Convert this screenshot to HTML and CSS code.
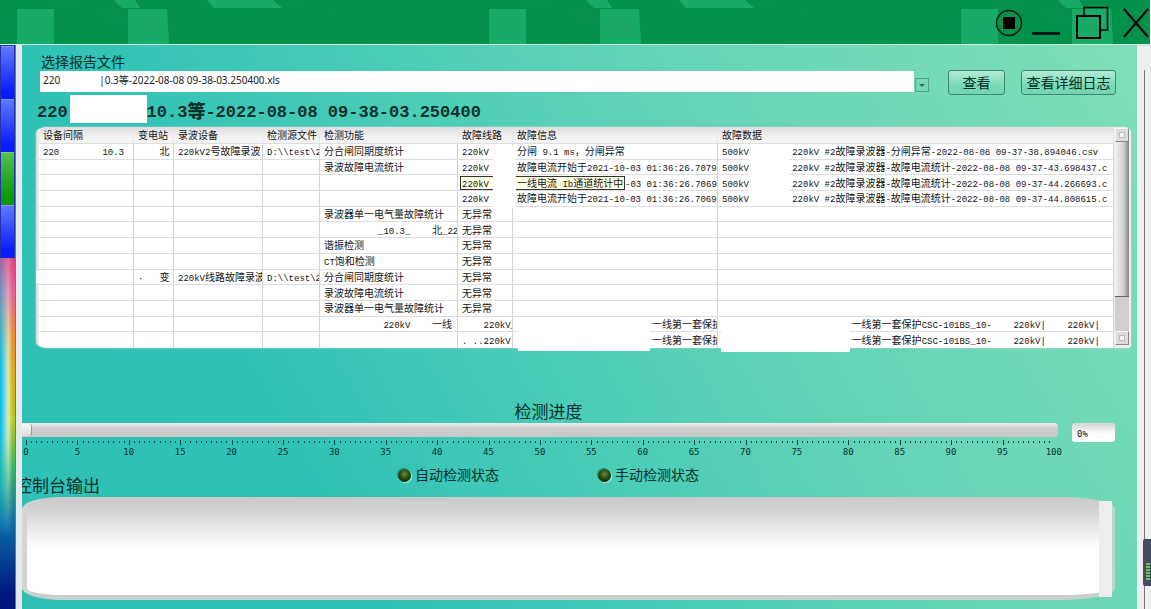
FILE: index.html
```html
<!DOCTYPE html>
<html lang="zh-CN">
<head>
<meta charset="utf-8">
<title>检测报告</title>
<link rel="stylesheet" href="styles.css">
</head>
<body>
<header class="titlebar">
  <svg class="pattern" width="100%" height="44" aria-hidden="true">
    <defs>
      <pattern id="blocks" width="472" height="44" patternUnits="userSpaceOnUse">
        <g fill="#18ab67">
          <path d="M17 9H54V44H17Z"/>
          <path d="M128 9H167L169 44H128Z"/>
          <path d="M114 0H135L140 8H122Z"/>
          <path d="M207 0H273L282 8H214Z"/>
        </g>
        <g fill="none" stroke="#2b9a60" stroke-width="1" opacity=".7">
          <path d="M134 28L147 16L160 30L150 40M138 32L148 22L156 30M142 36L149 28L153 32"/>
        </g>
        <g fill="none" stroke="#1a8a4c" stroke-width="1" opacity=".6">
          <path d="M103 10L118 22M110 8L122 18M52 4L60 1L74 6M290 2L294 8M298 0L304 6M330 14L336 10"/>
        </g>
      </pattern>
    </defs>
    <rect width="100%" height="44" fill="url(#blocks)"/>
  </svg>
  <div class="winbtns">
    <button class="wb" aria-label="停止"><svg width="28" height="28" viewBox="0 0 28 28"><circle cx="14" cy="14" r="12.5" fill="none" stroke="#05180c" stroke-width="1.5"/><rect x="8" y="8" width="12" height="12"/></svg></button>
    <button class="wb" aria-label="最小化"><svg width="30" height="28" viewBox="0 0 30 28"><path d="M1 24.500H29" stroke="#000" stroke-width="2.500"/></svg></button>
    <button class="wb" aria-label="还原"><svg width="34" height="34" viewBox="0 0 34 34" fill="none" stroke="#000"><path d="M9 9V1.500H32.500V24H26" stroke-width="1.500"/><rect x="2" y="10" width="23" height="22" stroke-width="2"/></svg></button>
    <button class="wb" aria-label="关闭"><svg width="26" height="30" viewBox="0 0 26 30"><path d="M1 1L25 29M25 1L1 29" stroke="#000" stroke-width="2"/></svg></button>
  </div>
</header>
<div class="body">
  <aside class="strip"><i></i><i></i><i class="on"></i><i></i><div class="glow"></div></aside>
  <main class="panel">
    <section class="picker">
      <label for="file">选择报告文件</label>
      <div class="pickrow">
        <div class="combo">
          <select id="file"><option>220&nbsp;&nbsp;&nbsp;&nbsp;&nbsp;&nbsp;&nbsp;&nbsp;&nbsp;&nbsp;&nbsp;&nbsp;&nbsp;&nbsp;&nbsp;|0.3等-2022-08-08 09-38-03.250400.xls</option></select>
          <span class="arrow"></span>
        </div>
        <button class="btn view">查看</button>
        <button class="btn log">查看详细日志</button>
      </div>
    </section>
    <h1>220<span class="mask"></span>10.3<b>等</b>-2022-08-08 09-38-03.250400</h1>
    <div class="grid">
      <table>
        <colgroup><col class="c1"><col class="c2"><col class="c3"><col class="c4"><col class="c5"><col class="c6"><col class="c7"><col></colgroup>
        <thead><tr><th>设备间隔</th><th>变电站</th><th>录波设备</th><th>检测源文件</th><th>检测功能</th><th>故障线路</th><th>故障信息</th><th>故障数据</th></tr></thead>
        <tbody>
          <tr><td><s>220        10.3</s></td><td><s>    </s>北</td><td><s>220kV2</s>号故障录波</td><td><s>D:\\test\2</s></td><td>分合闸同期度统计</td><td><s>220kV</s></td><td>分闸<s> 9.1 ms</s>，分闸异常</td><td><s>500kV        220kV #2</s>故障录波器<s>-</s>分闸异常<s>-2022-08-08 09-37-38.894046.csv</s></td></tr>
          <tr><td></td><td></td><td></td><td></td><td>录波故障电流统计</td><td><s>220kV</s></td><td>故障电流开始于<s>2021-10-03 01:36:26.7079</s></td><td><s>500kV        220kV #2</s>故障录波器<s>-</s>故障电流统计<s>-2022-08-08 09-37-43.698437.c</s></td></tr>
          <tr><td></td><td></td><td></td><td></td><td></td><td class="tip"><span class="hint line"><s>220kV</s></span></td><td class="tip"><span class="hint msg">一线电流<s> Ib</s>通道统计中</span><s>-03 01:36:26.7069</s></td><td><s>500kV        220kV #2</s>故障录波器<s>-</s>故障电流统计<s>-2022-08-08 09-37-44.266693.c</s></td></tr>
          <tr><td></td><td></td><td></td><td></td><td></td><td><s>220kV</s></td><td>故障电流开始于<s>2021-10-03 01:36:26.7069</s></td><td><s>500kV        220kV #2</s>故障录波器<s>-</s>故障电流统计<s>-2022-08-08 09-37-44.808615.c</s></td></tr>
          <tr><td></td><td></td><td></td><td></td><td>录波器单一电气量故障统计</td><td>无异常</td><td></td><td></td></tr>
          <tr><td></td><td></td><td></td><td></td><td><s>          _10.3_    </s>北<s>_22</s></td><td>无异常</td><td></td><td></td></tr>
          <tr><td></td><td></td><td></td><td></td><td>谐振检测</td><td>无异常</td><td></td><td></td></tr>
          <tr><td></td><td></td><td></td><td></td><td><s>CT</s>饱和检测</td><td>无异常</td><td></td><td></td></tr>
          <tr><td></td><td><s>·   </s>变</td><td><s>220kV</s>线路故障录波</td><td><s>D:\\test\2</s></td><td>分合闸同期度统计</td><td>无异常</td><td></td><td></td></tr>
          <tr><td></td><td></td><td></td><td></td><td>录波故障电流统计</td><td>无异常</td><td></td><td></td></tr>
          <tr><td></td><td></td><td></td><td></td><td>录波器单一电气量故障统计</td><td>无异常</td><td></td><td></td></tr>
          <tr><td></td><td></td><td></td><td></td><td><s>           220kV    </s>一线</td><td><s>    220kV_</s></td><td><s>                         </s>一线第一套保护</td><td><s>                        </s>一线第一套保护<s>CSC-101BS_10-    220kV|    220kV|</s></td></tr>
          <tr><td></td><td></td><td></td><td></td><td></td><td><s>. ..220kV.</s></td><td><s>                         </s>一线第一套保护</td><td><s>                        </s>一线第一套保护<s>CSC-101BS_10-    220kV|    220kV|</s></td></tr>
        </tbody>
      </table>
      <div class="vscroll"><span class="sb"></span><span class="thumb"></span><span class="track"></span><span class="sb"></span></div>
      <i class="patch p1"></i><i class="patch p2"></i><i class="patch p3"></i><i class="patch p4"></i><i class="patch p5"></i>
    </div>
    <label class="progress-title" for="progress">检测进度</label>
    <div class="progress">
      <div class="scale">
        <input type="range" id="progress" min="0" max="100" value="0">
        <div class="ticks"></div>
        <div class="nums"><span>0</span><span>5</span><span>10</span><span>15</span><span>20</span><span>25</span><span>30</span><span>35</span><span>40</span><span>45</span><span>50</span><span>55</span><span>60</span><span>65</span><span>70</span><span>75</span><span>80</span><span>85</span><span>90</span><span>95</span><span>100</span></div>
      </div>
      <input type="text" class="pct" value="0%" aria-label="检测进度百分比">
    </div>
    <div class="status">
      <span><i class="led"></i>自动检测状态</span>
      <span><i class="led"></i>手动检测状态</span>
    </div>
    <label class="console-title" for="console">控制台输出</label>
    <div class="console"><textarea id="console"></textarea><span class="cbar"></span></div>
  </main>
  <aside class="rail"><span class="meter"><i></i></span></aside>
</div>
</body>
</html>
```
FILE: styles.css
```css
* { box-sizing: border-box; }
body {
  margin: 0;
  min-height: 100vh;
  display: flex;
  flex-direction: column;
  overflow: hidden;
  font-family: "Liberation Sans", "Noto Sans CJK SC", sans-serif;
  color: #06302c;
}
button, input, select, textarea { font: inherit; color: inherit; margin: 0; }

.titlebar {
  position: relative;
  height: 45px;
  background: #03914b;
  border-bottom: 1px solid #c8f2e0;
  margin-right: 1px;
}
.pattern { display: block; }
.winbtns {
  position: absolute;
  top: 6px;
  right: 1px;
  display: flex;
  align-items: center;
  gap: 8px;
}
.wb { border: 0; padding: 0; background: none; display: flex; }
.wb:nth-child(3) { margin: 0 6px; }

.body { flex: 1; display: flex; }
.strip {
  width: 16px;
  padding-top: 1px;
  display: flex;
  flex-direction: column;
  border-right: 1px solid #8a62a8;
  background: #2233aa;
}
.strip i {
  display: block;
  height: 53px;
  margin: 0 1px;
  background: linear-gradient(#6078ff, #0a1cff 85%);
  border-top: 1px solid #8292ff;
}
.strip i.on { background: linear-gradient(#55c050, #089a08 85%); border-color: #70d070; }
.glow {
  flex: 1;
  background: linear-gradient(#e0407f, #e8609a 10%, #ef8a30 22%, #d8b010 36%, #b9c81c 46%, #35b468 60%, #0d6fa8 75%, #00157e 96%);
}
.glow::before {
  content: "";
  display: block;
  height: 100%;
  background:
    linear-gradient(to right, #06b8e4, rgba(110,225,240,.9) 35%, rgba(235,248,225,.75) 55%, rgba(255,255,255,0) 85%);
  -webkit-mask-image: linear-gradient(rgba(0,0,0,.3), #000 30%, #000 50%, transparent 80%);
  mask-image: linear-gradient(rgba(0,0,0,.3), #000 30%, #000 50%, transparent 80%);
}

.panel {
  flex: 1;
  min-width: 0;
  display: flex;
  flex-direction: column;
  margin-left: 6px;
  background: linear-gradient(60deg, #2ec0b6 0%, #31c2b6 26%, #4ccdb6 48%, #66d4b7 68%, #80dfb8 100%);
  box-shadow: -6px 0 0 #e4e9ec;
  overflow: hidden;
}

.picker { padding: 8px 21px 0 18px; }
.picker label { display: block; font-size: 14px; line-height: 18px; padding-left: 1px; }
.pickrow { display: flex; align-items: flex-start; }
.combo { flex: 1; display: flex; align-items: flex-end; }
.combo select {
  flex: 1;
  height: 21px;
  appearance: none;
  border: 0;
  border-radius: 0;
  padding: 0 3px 3px;
  background: #fff;
  color: #222;
  font-family: "Noto Sans", "Noto Sans CJK SC", sans-serif;
  font-size: 10px;
}
.arrow {
  width: 14px;
  height: 14px;
  border: 1px solid #55a088;
  display: grid;
  place-items: center;
  margin-left: 1px;
}
.arrow::before { content: ""; border: 3px solid transparent; border-top-color: #2f6a5c; border-bottom: 0; }
.btn {
  height: 25px;
  padding: 0;
  border: 1px solid #3f8573;
  border-radius: 3px;
  background: linear-gradient(#b4ecd6, #7bd9b6 60%, #74d4b0);
  font-size: 14px;
  line-height: 20px;
  margin-top: -1px;
}
.view { width: 57px; margin-left: 19px; }
.log { width: 95px; margin-left: 16px; }

h1 {
  margin: 3px 0 0 15px;
  height: 29px;
  white-space: pre;
  font: 700 17px/32px "Liberation Mono", "Noto Sans CJK SC", monospace;
  display: flex;
  align-items: center;
}
h1 b { font-size: 18px; }
h1 .mask { width: 77px; height: 28px; margin: -7px 0 0 2px; background: #fff; }

.grid {
  position: relative;
  display: flex;
  margin: 0 6px 0 14px;
  padding-left: 3px;
  border-radius: 12px 8px 4px 12px / 6px 6px 4px 6px;
  background: linear-gradient(to right, #d4d6d6, #fff 4px);
  box-shadow: 0 0 2px #c8d8d2;
}
table {
  flex: 1;
  width: 0;
  height: 221px;
  table-layout: fixed;
  border-collapse: separate;
  border-spacing: 0;
  font: 10px/14px "Noto Sans CJK SC", sans-serif;
  color: #151515;
}
.c1 { width: 95px; } .c2 { width: 40px; } .c3 { width: 89px; } .c4 { width: 57px; }
.c5 { width: 138px; } .c6 { width: 55px; } .c7 { width: 205px; }
th, td {
  height: 15px;
  padding: 0 0 0 4px;
  white-space: pre;
  overflow: hidden;
  text-align: left;
  font-weight: 400;
  border-right: 1px solid #d4d4d4;
  border-bottom: 1px solid #dedede;
  background: #fff;
}
th { height: 17px; border-right-color: #e6e6e6; background: linear-gradient(#dedede, #f4f4f4 70%); }
th:first-child { border-top-left-radius: 10px 6px; }
tr:last-child td { border-bottom: 0; }
tr:last-child td:first-child { border-bottom-left-radius: 10px 6px; }
td s { text-decoration: none; font: 9px/1px "Liberation Mono", monospace; }
td.tip { padding-left: 2px; }
.hint {
  display: inline-block;
  height: 14px;
  line-height: 12px;
  vertical-align: top;
  border: 1px solid #333;
  background: #ffffe1;
  padding-left: 1px;
}
.line { width: 40px; }
.msg { width: 110px; }

.vscroll { width: 17px; padding: 1px 2px 3px 1px; display: flex; flex-direction: column; background: #eee; border-radius: 0 6px 4px 0; }
.vscroll .sb { height: 14px; background: #dcdcdc; border: 1px solid #f4f4f4; border-right-color: #888; border-bottom-color: #888; display: grid; place-items: center; }
.vscroll .sb::before { content: ""; width: 4px; height: 4px; border: 1px solid #bbb; background: #f4f4f4; }
.thumb { flex: 1; background: linear-gradient(to right, #f2f2f2, #d2d2d2 60%, #858585); border-bottom: 1px solid #666; }
.track { height: 34px; background: #cfcfcf; }

.patch { position: absolute; background: #fff; }
.p1 { left: 457px; top: 19px; width: 23px; height: 62px; }
.p2 { left: 713px; top: 19px; width: 40px; height: 60px; }
.p3 { left: 0; top: 144px; width: 36px; height: 12px; }
.p4 { left: 482px; top: 191px; width: 132px; height: 33px; }
.p5 { left: 685px; top: 191px; width: 129px; height: 34px; }

.progress-title {
  font-size: 17px;
  line-height: 20px;
  margin-top: 55px;
  padding-right: 62px;
  text-align: center;
}
.progress { display: flex; align-items: flex-start; padding-right: 22px; gap: 14px; }
.scale { flex: 1; }
.scale input {
  display: block;
  width: 100%;
  height: 14px;
  appearance: none;
  border-radius: 0 4px 4px 0;
  background: linear-gradient(#ececec, #cdcdcd 40%, #c8c8c8);
}
.scale input::-webkit-slider-thumb {
  appearance: none;
  width: 10px;
  height: 12px;
  border-right: 1px solid #999;
  border-radius: 0 3px 3px 0;
  background: linear-gradient(#fafafa, #d8d8d8);
}
.ticks {
  height: 5px;
  margin: 3px 4px 0;
  background:
    repeating-linear-gradient(to right, #08423f 0 1px, transparent 1px 5%) 0 0 / 100% 5px no-repeat,
    repeating-linear-gradient(to right, #0b4d49 0 1px, transparent 1px 0.5%) 0 1px / 100% 2px no-repeat;
}
.nums {
  display: flex;
  justify-content: space-between;
  margin: 0 4px;
  font: 9px/14px "DejaVu Sans Mono", monospace;
}
.nums span { width: 0; display: flex; justify-content: center; }
.pct {
  width: 43px;
  height: 19px;
  border: 0;
  border-radius: 3px;
  padding: 3px 5px 0;
  background: linear-gradient(#d4d4d4, #fff 60%);
  color: #111;
  font: 9px/14px "DejaVu Sans Mono", monospace;
}

.status {
  display: flex;
  justify-content: center;
  gap: 99px;
  margin-top: 7px;
  padding-right: 62px;
  font-size: 14px;
  line-height: 18px;
}
.status span { display: flex; align-items: center; gap: 4px; }
.led {
  width: 13px;
  height: 13px;
  border-radius: 50%;
  background: radial-gradient(circle at 50% 38%, #6f8a46, #2a4a10 45%, #0c2a06 80%);
  box-shadow: 1px 1px 1px #a5f0d8, -1px -1px 1px #2a8a74;
}
.console-title { font-size: 17px; line-height: 20px; margin: -7px 0 0 -7px; width: 200px; }
.console {
  position: relative;
  flex: 1;
  display: flex;
  margin: 0 22px 9px 0;
}
.console textarea {
  flex: 1;
  min-height: 90px;
  resize: none;
  outline: 0;
  border: 0;
  border-left: 5px solid #d4d4d4;
  border-right: 3px solid #b9d8cc;
  border-bottom: 5px solid #c9cfcd;
  border-radius: 40px 54px 54px 40px / 12px;
  background: linear-gradient(#c9c9c9, #d2d2d2 12%, #fff 52%);
}
.cbar { position: absolute; top: 4px; right: 3px; bottom: 3px; width: 13px; background: #ededed; }

.rail {
  position: relative;
  width: 14px;
  background: linear-gradient(to right, #eee 7px, #777 7px 8px, #eee 8px) 0 24px no-repeat, #eee;
  border-top: 1px solid #ddd;
}
.meter {
  position: absolute;
  right: 0;
  bottom: 23px;
  width: 8px;
  height: 47px;
  border-radius: 2px 0 0 2px;
  background: #444b5e;
}
.meter i {
  position: absolute;
  left: 3px;
  bottom: 5px;
  width: 4px;
  height: 18px;
  background: repeating-linear-gradient(#6fbf5a 0 2px, #444b5e 2px 3px);
}
```
